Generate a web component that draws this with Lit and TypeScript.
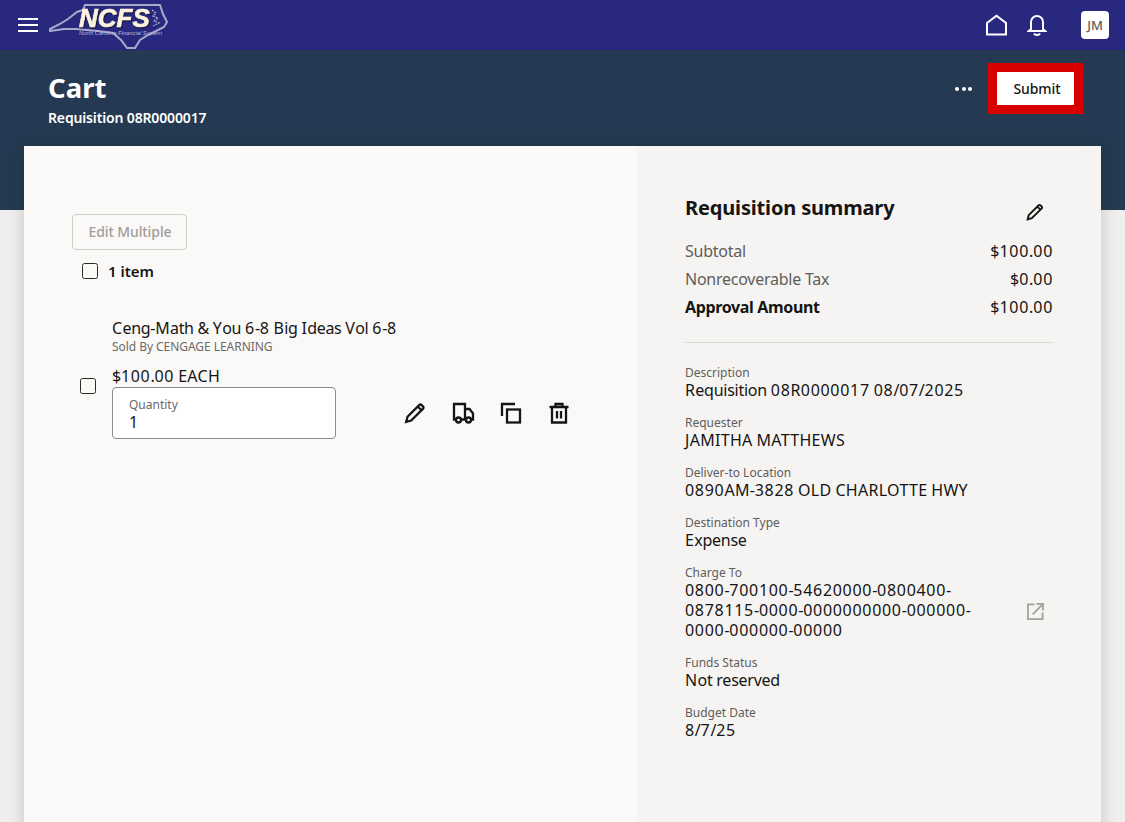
import { LitElement, html, css, svg } from "lit";
import { customElement } from "lit/decorators.js";

const pencil = (size = 24) => html`<svg width=${size} height=${size} viewBox="0 0 24 24" fill="none" stroke="#161513" stroke-width="2.300"><path d="M3.200 20.800l1.300-5L16.400 3.900a1.400 1.400 0 0 1 2 0l1.700 1.700a1.400 1.400 0 0 1 0 2L8.200 19.500z"/><path d="M14.800 5.500l3.700 3.700"/></svg>`;

// Digits run wider and lowercase narrower in the reference face than in the stand-in family.
const fit = (text: string) =>
  text.split(/(\d+|[A-Z]+)/).map((part) =>
    /^\d/.test(part) ? html`<span class="d">${part}</span>` : /^[A-Z]/.test(part) ? html`<span class="u">${part}</span>` : part
  );

const details: [string, string[]][] = [
  ["Description", ["Requisition 08R0000017 08/07/2025"]],
  ["Requester", ["JAMITHA MATTHEWS"]],
  ["Deliver-to Location", ["0890AM-3828 OLD CHARLOTTE HWY"]],
  ["Destination Type", ["Expense"]],
  ["Charge To", ["0800-700100-54620000-0800400-", "0878115-0000-0000000000-000000-", "0000-000000-00000"]],
  ["Funds Status", ["Not reserved"]],
  ["Budget Date", ["8/7/25"]],
];

@customElement("app-root")
export class AppRoot extends LitElement {
  static styles = css`
    :host { display: block; height: 822px; overflow: hidden; background: #f1efed; font-family: "Noto Sans", "Open Sans", sans-serif; color: #161513; }
    .d { letter-spacing: .7px; }
    .u { letter-spacing: .3px; }
    .top { height: 50px; background: #27287e; display: flex; align-items: center; padding: 0 16px 0 18px; }
    .burger { width: 20px; display: flex; flex-direction: column; gap: 4px; margin-right: 10px; }
    .burger i { display: block; height: 2px; background: #fff; }
    .logo { display: block; margin-top: 2px; }
    .logo-name { filter: drop-shadow(1px 1px 0 #14143c); }
    .spacer { flex: 1; }
    .top-icon { display: block; }
    .home { margin-right: 20px; }
    .bell { margin-right: 34px; }
    .avatar { width: 28px; height: 28px; background: #fff; border-radius: 4px; color: #5f5d5a; font-size: 13px; font-weight: 500; display: flex; align-items: center; justify-content: center; }
    .band { height: 160px; background: #253a52; display: flex; align-items: flex-start; justify-content: space-between; padding: 0 42px 0 48px; color: #fff; box-sizing: border-box; }
    .titles { padding-top: 18px; }
    h1 { margin: 0; font-size: 27.500px; line-height: 40px; font-weight: 700; }
    .sub { font-size: 14px; line-height: 20px; font-weight: 600; letter-spacing: -.15px; }
    .actions { display: flex; align-items: center; padding-top: 13px; gap: 16px; }
    .dots { display: flex; gap: 2.500px; }
    .dots i { width: 4px; height: 4px; border-radius: 50%; background: #fff; display: block; }
    .submit { box-sizing: border-box; width: 95px; height: 51px; border: 9px solid #d90000; background: #fff; padding-left: 3px; display: flex; align-items: center; justify-content: center; font-size: 14px; font-weight: 500; letter-spacing: -.1px; color: #161513; }
    .card { margin: -64px 24px 0; height: 700px; display: flex; box-shadow: 0 0 16px rgba(0,0,0,.18); }
    .left { width: 613px; background: #fbf9f8; box-sizing: border-box; padding: 68px 0 0 48px; }
    .right { flex: 1; background: #f5f4f2; box-sizing: border-box; padding: 48px 48px 0; }
    .edit { box-sizing: border-box; width: 115px; height: 36px; padding: 0 0 1px 1px; border: 1px solid #cfcdca; border-radius: 4px; color: #a09e9b; font-size: 14px; font-weight: 500; letter-spacing: -.1px; display: flex; align-items: center; justify-content: center; }
    .check { box-sizing: border-box; width: 16px; height: 16px; border: 1.500px solid #2b2926; border-radius: 2.500px; flex: none; }
    .all { display: flex; align-items: center; gap: 10px; margin: 11px 0 0 10px; height: 20px; font-size: 15px; font-weight: 600; }
    .item { display: flex; margin: 36px 0 0 8px; }
    .item .check { margin-top: 61px; }
    .info { margin-left: 16px; }
    .name { font-size: 16px; line-height: 22px; letter-spacing: -.3px; }
    .sold { font-size: 12px; line-height: 16px; color: #6b6966; letter-spacing: -.05px; }
    .price { font-size: 16px; line-height: 20px; margin-top: 11px; letter-spacing: -.25px; }
    .qty-row { display: flex; align-items: center; }
    .qty { box-sizing: border-box; width: 224px; height: 52px; border: 1px solid #8f8d8a; border-radius: 4px; background: #fff; padding: 9px 16px 0; margin-top: 1px; }
    .qty small { display: block; font-size: 12px; line-height: 16px; color: #6b6966; }
    .qty b { display: block; font-weight: 400; font-size: 16px; line-height: 18px; }
    .tools { display: flex; gap: 24px; margin-left: 67px; }
    .tools svg { display: block; }
    .head { display: flex; justify-content: space-between; align-items: center; padding-right: 8px; height: 28px; }
    h2 { margin: 0; font-size: 20px; font-weight: 700; line-height: 28px; letter-spacing: -.16px; }
    .head svg { margin-top: 8px; }
    .sum { margin-top: 15px; }
    .row { display: flex; justify-content: space-between; font-size: 16px; line-height: 28px; color: #161513; }
    .row span.lbl { color: #5f5d5a; letter-spacing: -.25px; }
    .row.total span.lbl { color: #161513; font-weight: 700; letter-spacing: -.35px; }
    hr { border: 0; border-top: 1px solid #dcdad7; margin: 21px 0 21px; }
    .field { margin-bottom: 14px; position: relative; }
    .field small { display: block; font-size: 12px; line-height: 18px; margin-bottom: -2px; color: #5f5d5a; }
    .field div { font-size: 16px; line-height: 20px; letter-spacing: -.25px; }
    .ext { position: absolute; right: 9px; top: 39px; }
  `;

  render() {
    return html`
      <div class="top">
        <div class="burger"><i></i><i></i><i></i></div>
        <svg class="logo" width="122" height="48" viewBox="0 0 122 48">
          <path d="M2 27 L12 22 L20 17 L29 10 L35 8 L37 3 L112 3 L115 12 L119 20 L116 25 L108 29 L100 33 L92 38 L87 46 L79 46 L73 38 L65 31 L50 29 L28 27 L16 27 L2 29 Z" fill="none" stroke="#a9a9cc" stroke-width="2"/>
          <path d="M104 8l4 3-3 3 5 2-4 3 5 2-6 3" fill="none" stroke="#a9a9cc" stroke-width="1.300" stroke-dasharray="2 1"/>
          ${svg`<text class="logo-name" x="31" y="25" font-family="Liberation Sans" font-size="26" font-weight="700" font-style="italic" fill="#fdf3dd" stroke="#fdf3dd" stroke-width=".7">NCFS</text>
          <text x="31" y="32.500" font-family="Liberation Sans" font-size="5.800" font-style="italic" fill="#b9b9d6">North Carolina Financial System</text>`}
        </svg>
        <div class="spacer"></div>
        <svg class="top-icon home" width="21" height="22" viewBox="1 0 20 22" fill="none" stroke="#fff" stroke-width="2"><path d="M1.500 20.500V9L11 1.800 20.500 9v11.500z"/></svg>
        <svg class="top-icon bell" width="20" height="22" viewBox="0 0 20 22" fill="none" stroke="#fff" stroke-width="2"><path d="M4 15V8a6 6 0 0 1 12 0v7l2.200 2H1.800z"/><path d="M7 19.500c1 2 5 2 6 0"/></svg>
        <div class="avatar">JM</div>
      </div>
      <div class="band">
        <div class="titles">
          <h1>Cart</h1>
          <div class="sub">Requisition 08R0000017</div>
        </div>
        <div class="actions">
          <div class="dots"><i></i><i></i><i></i></div>
          <div class="submit">Submit</div>
        </div>
      </div>
      <div class="card">
        <div class="left">
          <div class="edit">Edit Multiple</div>
          <div class="all"><span class="check"></span>1 item</div>
          <div class="item">
            <span class="check"></span>
            <div class="info">
              <div class="name">${fit("Ceng-Math & You 6-8 Big Ideas Vol 6-8")}</div>
              <div class="sold">Sold By CENGAGE LEARNING</div>
              <div class="price">${fit("$100.00 EACH")}</div>
              <div class="qty-row">
                <div class="qty"><small>Quantity</small><b>1</b></div>
                <div class="tools">
                  ${pencil()}
                  <svg width="24" height="24" viewBox="0 0 24 24" fill="none" stroke="#161513" stroke-width="2.300"><path d="M5 18.500H3V3h11v15.500H10"/><path d="M14 8h4.500l3.500 4.500v6h-1.500"/><path d="M14 18.500h1"/><circle cx="7.500" cy="19" r="2.500"/><circle cx="17.500" cy="19" r="2.500"/></svg>
                  <svg width="24" height="24" viewBox="0 0 24 24" fill="none" stroke="#161513" stroke-width="2.300"><path d="M3 15V3h13"/><rect x="8" y="8.500" width="13" height="13"/></svg>
                  <svg width="24" height="24" viewBox="0 0 24 24" fill="none" stroke="#161513" stroke-width="2.300"><path d="M2.500 6h19M8.500 6V3h7v3"/><path d="M5 6v15.500h14V6"/><path d="M10 10v7.500M14 10v7.500"/></svg>
                </div>
              </div>
            </div>
          </div>
        </div>
        <div class="right">
          <div class="head"><h2>Requisition summary</h2>${pencil(20)}</div>
          <div class="sum">
            <div class="row"><span class="lbl">Subtotal</span><span>${fit("$100.00")}</span></div>
            <div class="row"><span class="lbl">Nonrecoverable Tax</span><span>${fit("$0.00")}</span></div>
            <div class="row total"><span class="lbl">Approval Amount</span><span>${fit("$100.00")}</span></div>
          </div>
          <hr />
          ${details.map(([label, lines]) => html`
            <div class="field">
              <small>${label}</small>
              ${lines.map((l) => html`<div>${fit(l)}</div>`)}
              ${label === "Charge To" ? html`<svg class="ext" width="17" height="17" viewBox="0 0 18 18" fill="none" stroke="#a3a19e" stroke-width="1.900"><path d="M8 1.500H1v15.500h15.500V10"/><path d="M6 12L16.500 1.500M10 1h7v7"/></svg>` : ""}
            </div>`)}
        </div>
      </div>
    `;
  }
}
